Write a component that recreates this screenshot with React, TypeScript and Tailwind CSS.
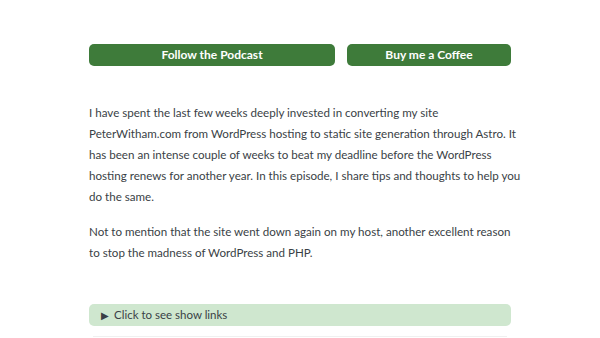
export default function App() {
  return (
    <div className="min-h-screen bg-white font-['Lato','Noto_Sans',sans-serif] text-[#3a3f46]">
      <div className="w-[422px] ml-[89px] pt-[44px]">
        <div className="flex gap-3">
          <a className="w-[246px] h-[22px] bg-[#3e7b3a] rounded-[5px] text-white text-[12px] font-bold flex items-center justify-center">
            Follow the Podcast
          </a>
          <a className="flex-1 h-[22px] bg-[#3e7b3a] rounded-[5px] text-white text-[12px] font-bold flex items-center justify-center">
            Buy me a Coffee
          </a>
        </div>

        <div className="mt-[36px] text-[11.6px] leading-[21px] space-y-[14px] whitespace-nowrap">
          <p>
            I have spent the last few weeks deeply invested in converting my site<br />
            PeterWitham.com from WordPress hosting to static site generation through Astro. It<br />
            has been an intense couple of weeks to beat my deadline before the WordPress<br />
            hosting renews for another year. In this episode, I share tips and thoughts to help you<br />
            do the same.
          </p>
          <p>
            Not to mention that the site went down again on my host, another excellent reason<br />
            to stop the madness of WordPress and PHP.
          </p>
        </div>

        <details className="mt-[41px]">
          <summary className="h-[22px] bg-[#cfe7cf] rounded-[5px] flex items-center pl-[12px] text-[11.5px] text-[#3a3f46] cursor-pointer list-none">
            <span className="text-[10px] mr-[5px]">▶</span>
            Click to see show links
          </summary>
        </details>
        <div className="mt-[10px] mx-[4px] border-t border-[#f0f0f0]" />
      </div>
    </div>
  );
}
